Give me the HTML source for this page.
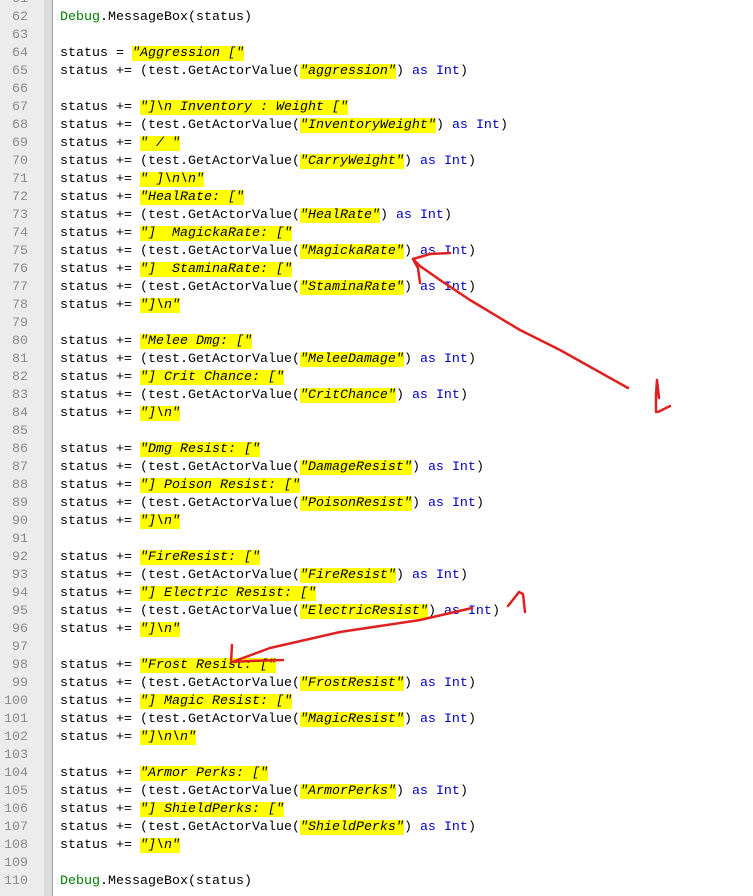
<!DOCTYPE html>
<html><head><meta charset="utf-8"><style>
body{margin:0;width:753px;height:896px;overflow:hidden;background:#fff;position:relative;font-family:"Liberation Mono","Courier New",monospace;font-size:13.33px}
.g{position:absolute;left:0;top:0;width:44px;height:896px;background:#ececec}
.g2{position:absolute;left:44px;top:0;width:8px;height:896px;background:#dcdcdc;border-right:1px solid #a0a0a0}
.l{position:absolute;left:0;height:18px;line-height:18px;white-space:pre}
.n{position:absolute;left:0;width:28px;text-align:right;color:#8a8a8a}
.c{position:absolute;left:60px;color:#000}
.s{background:#ffff00;font-style:italic;color:#000}
.k{color:#0000c0}
.d{color:#008000}
svg{position:absolute;left:0;top:0}
</style></head><body>
<div class="g"></div><div class="g2"></div>
<div id="code">
<div class="l" style="top:-9px"><span class="n">61</span></div>
<div class="l" style="top:9px"><span class="n">62</span><span class="c"><span class="d">Debug</span>.MessageBox(status)</span></div>
<div class="l" style="top:27px"><span class="n">63</span></div>
<div class="l" style="top:45px"><span class="n">64</span><span class="c">status = <span class="s">"Aggression ["</span></span></div>
<div class="l" style="top:63px"><span class="n">65</span><span class="c">status += (test.GetActorValue(<span class="s">"aggression"</span>) <span class="k">as</span> <span class="k">Int</span>)</span></div>
<div class="l" style="top:81px"><span class="n">66</span></div>
<div class="l" style="top:99px"><span class="n">67</span><span class="c">status += <span class="s">"]\n Inventory : Weight ["</span></span></div>
<div class="l" style="top:117px"><span class="n">68</span><span class="c">status += (test.GetActorValue(<span class="s">"InventoryWeight"</span>) <span class="k">as</span> <span class="k">Int</span>)</span></div>
<div class="l" style="top:135px"><span class="n">69</span><span class="c">status += <span class="s">" / "</span></span></div>
<div class="l" style="top:153px"><span class="n">70</span><span class="c">status += (test.GetActorValue(<span class="s">"CarryWeight"</span>) <span class="k">as</span> <span class="k">Int</span>)</span></div>
<div class="l" style="top:171px"><span class="n">71</span><span class="c">status += <span class="s">" ]\n\n"</span></span></div>
<div class="l" style="top:189px"><span class="n">72</span><span class="c">status += <span class="s">"HealRate: ["</span></span></div>
<div class="l" style="top:207px"><span class="n">73</span><span class="c">status += (test.GetActorValue(<span class="s">"HealRate"</span>) <span class="k">as</span> <span class="k">Int</span>)</span></div>
<div class="l" style="top:225px"><span class="n">74</span><span class="c">status += <span class="s">"]  MagickaRate: ["</span></span></div>
<div class="l" style="top:243px"><span class="n">75</span><span class="c">status += (test.GetActorValue(<span class="s">"MagickaRate"</span>) <span class="k">as</span> <span class="k">Int</span>)</span></div>
<div class="l" style="top:261px"><span class="n">76</span><span class="c">status += <span class="s">"]  StaminaRate: ["</span></span></div>
<div class="l" style="top:279px"><span class="n">77</span><span class="c">status += (test.GetActorValue(<span class="s">"StaminaRate"</span>) <span class="k">as</span> <span class="k">Int</span>)</span></div>
<div class="l" style="top:297px"><span class="n">78</span><span class="c">status += <span class="s">"]\n"</span></span></div>
<div class="l" style="top:315px"><span class="n">79</span></div>
<div class="l" style="top:333px"><span class="n">80</span><span class="c">status += <span class="s">"Melee Dmg: ["</span></span></div>
<div class="l" style="top:351px"><span class="n">81</span><span class="c">status += (test.GetActorValue(<span class="s">"MeleeDamage"</span>) <span class="k">as</span> <span class="k">Int</span>)</span></div>
<div class="l" style="top:369px"><span class="n">82</span><span class="c">status += <span class="s">"] Crit Chance: ["</span></span></div>
<div class="l" style="top:387px"><span class="n">83</span><span class="c">status += (test.GetActorValue(<span class="s">"CritChance"</span>) <span class="k">as</span> <span class="k">Int</span>)</span></div>
<div class="l" style="top:405px"><span class="n">84</span><span class="c">status += <span class="s">"]\n"</span></span></div>
<div class="l" style="top:423px"><span class="n">85</span></div>
<div class="l" style="top:441px"><span class="n">86</span><span class="c">status += <span class="s">"Dmg Resist: ["</span></span></div>
<div class="l" style="top:459px"><span class="n">87</span><span class="c">status += (test.GetActorValue(<span class="s">"DamageResist"</span>) <span class="k">as</span> <span class="k">Int</span>)</span></div>
<div class="l" style="top:477px"><span class="n">88</span><span class="c">status += <span class="s">"] Poison Resist: ["</span></span></div>
<div class="l" style="top:495px"><span class="n">89</span><span class="c">status += (test.GetActorValue(<span class="s">"PoisonResist"</span>) <span class="k">as</span> <span class="k">Int</span>)</span></div>
<div class="l" style="top:513px"><span class="n">90</span><span class="c">status += <span class="s">"]\n"</span></span></div>
<div class="l" style="top:531px"><span class="n">91</span></div>
<div class="l" style="top:549px"><span class="n">92</span><span class="c">status += <span class="s">"FireResist: ["</span></span></div>
<div class="l" style="top:567px"><span class="n">93</span><span class="c">status += (test.GetActorValue(<span class="s">"FireResist"</span>) <span class="k">as</span> <span class="k">Int</span>)</span></div>
<div class="l" style="top:585px"><span class="n">94</span><span class="c">status += <span class="s">"] Electric Resist: ["</span></span></div>
<div class="l" style="top:603px"><span class="n">95</span><span class="c">status += (test.GetActorValue(<span class="s">"ElectricResist"</span>) <span class="k">as</span> <span class="k">Int</span>)</span></div>
<div class="l" style="top:621px"><span class="n">96</span><span class="c">status += <span class="s">"]\n"</span></span></div>
<div class="l" style="top:639px"><span class="n">97</span></div>
<div class="l" style="top:657px"><span class="n">98</span><span class="c">status += <span class="s">"Frost Resist: ["</span></span></div>
<div class="l" style="top:675px"><span class="n">99</span><span class="c">status += (test.GetActorValue(<span class="s">"FrostResist"</span>) <span class="k">as</span> <span class="k">Int</span>)</span></div>
<div class="l" style="top:693px"><span class="n">100</span><span class="c">status += <span class="s">"] Magic Resist: ["</span></span></div>
<div class="l" style="top:711px"><span class="n">101</span><span class="c">status += (test.GetActorValue(<span class="s">"MagicResist"</span>) <span class="k">as</span> <span class="k">Int</span>)</span></div>
<div class="l" style="top:729px"><span class="n">102</span><span class="c">status += <span class="s">"]\n\n"</span></span></div>
<div class="l" style="top:747px"><span class="n">103</span></div>
<div class="l" style="top:765px"><span class="n">104</span><span class="c">status += <span class="s">"Armor Perks: ["</span></span></div>
<div class="l" style="top:783px"><span class="n">105</span><span class="c">status += (test.GetActorValue(<span class="s">"ArmorPerks"</span>) <span class="k">as</span> <span class="k">Int</span>)</span></div>
<div class="l" style="top:801px"><span class="n">106</span><span class="c">status += <span class="s">"] ShieldPerks: ["</span></span></div>
<div class="l" style="top:819px"><span class="n">107</span><span class="c">status += (test.GetActorValue(<span class="s">"ShieldPerks"</span>) <span class="k">as</span> <span class="k">Int</span>)</span></div>
<div class="l" style="top:837px"><span class="n">108</span><span class="c">status += <span class="s">"]\n"</span></span></div>
<div class="l" style="top:855px"><span class="n">109</span></div>
<div class="l" style="top:873px"><span class="n">110</span><span class="c"><span class="d">Debug</span>.MessageBox(status)</span></div>
</div>
<svg width="753" height="896" fill="none" stroke="#e02020" stroke-width="2.5" stroke-linecap="round" stroke-linejoin="round">
<path d="M628,388 L560,350 L520,330 L470,300 L440,280 L420,266 L413,259"/>
<path d="M450,253 L430,254 L413,259 L418,268 L420,283"/>
<path d="M656,412 L656,395 L657,380 L659,398 M658,412 L670,406"/>
<path d="M472,608 L420,620 L340,632 L270,648 L232,662"/>
<path d="M232,645 L231,662 L250,661 L283,660"/>
<path d="M508,606 L519,592 L523,594 L525,612"/>
</svg>
</body></html>
